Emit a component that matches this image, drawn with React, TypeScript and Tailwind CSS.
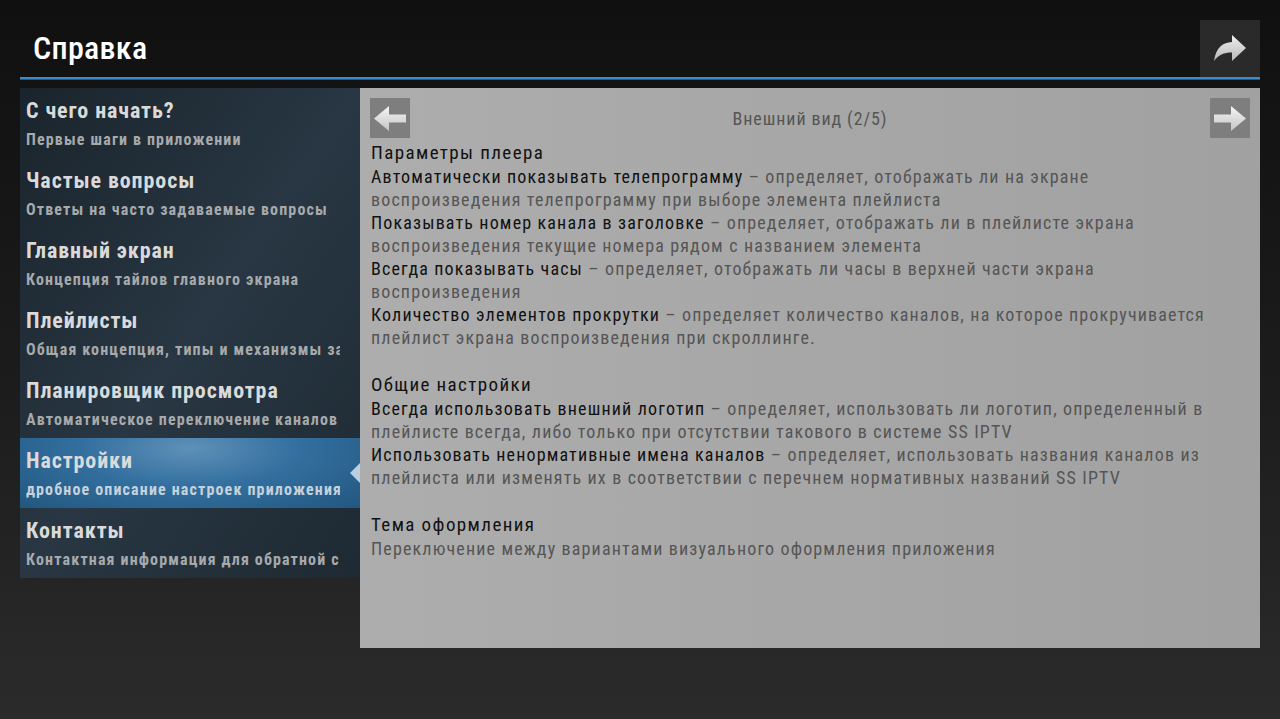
import React from 'react';

const font = { fontFamily: '"Roboto Condensed", "Liberation Sans Narrow", Roboto, sans-serif' };

const menu = [
  { title: 'С чего начать?', sub: 'Первые шаги в приложении' },
  { title: 'Частые вопросы', sub: 'Ответы на часто задаваемые вопросы' },
  { title: 'Главный экран', sub: 'Концепция тайлов главного экрана' },
  { title: 'Плейлисты', sub: 'Общая концепция, типы и механизмы загрузки' },
  { title: 'Планировщик просмотра', sub: 'Автоматическое переключение каналов' },
  { title: 'Настройки', sub: 'дробное описание настроек приложения', active: true },
  { title: 'Контакты', sub: 'Контактная информация для обратной связи' },
];

type Line = { strong?: string; text?: string };
type Section = { heading: string; lines: Line[] };

const sections: Section[] = [
  {
    heading: 'Параметры плеера',
    lines: [
      { strong: 'Автоматически показывать телепрограмму', text: ' – определяет, отображать ли на экране' },
      { text: 'воспроизведения телепрограмму при выборе элемента плейлиста' },
      { strong: 'Показывать номер канала в заголовке', text: ' – определяет, отображать ли в плейлисте экрана' },
      { text: 'воспроизведения текущие номера рядом с названием элемента' },
      { strong: 'Всегда показывать часы', text: ' – определяет, отображать ли часы в верхней части экрана' },
      { text: 'воспроизведения' },
      { strong: 'Количество элементов прокрутки', text: ' – определяет количество каналов, на которое прокручивается' },
      { text: 'плейлист экрана воспроизведения при скроллинге.' },
    ],
  },
  {
    heading: 'Общие настройки',
    lines: [
      { strong: 'Всегда использовать внешний логотип', text: ' – определяет, использовать ли логотип, определенный в' },
      { text: 'плейлисте всегда, либо только при отсутствии такового в системе SS IPTV' },
      { strong: 'Использовать ненормативные имена каналов', text: ' – определяет, использовать названия каналов из' },
      { text: 'плейлиста или изменять их в соответствии с перечнем нормативных названий SS IPTV' },
    ],
  },
  {
    heading: 'Тема оформления',
    lines: [{ text: 'Переключение между вариантами визуального оформления приложения' }],
  },
];

function BlockArrow({ dir }: { dir: 'left' | 'right' }) {
  const id = `ga-${dir}`;
  return (
    <svg width="32" height="25" viewBox="0 0 32 25" className={dir === 'left' ? '-scale-x-100' : ''}>
      <defs>
        <linearGradient id={id} x1="0" y1="0" x2="0" y2="1">
          <stop offset="0" stopColor="#f6f6f6" />
          <stop offset="1" stopColor="#c4c4c4" />
        </linearGradient>
      </defs>
      <path d="M0 8.5 H17 V0 L32 12.5 L17 25 V16.5 H0 Z" fill={`url(#${id})`} />
    </svg>
  );
}

function ShareArrow() {
  return (
    <svg width="34" height="28" viewBox="0 0 34 28">
      <defs>
        <linearGradient id="gs" x1="0" y1="0" x2="0" y2="1">
          <stop offset="0" stopColor="#f0f0f0" />
          <stop offset="1" stopColor="#b8b8b8" />
        </linearGradient>
      </defs>
      <path d="M33 13 L19 0 L19 7 C10 7.5 3 12 1 26 C5 20 11 17.5 19 17.5 L19 26 Z" fill="url(#gs)" />
    </svg>
  );
}

export default function App() {
  return (
    <div
      className="w-[1280px] h-[719px] overflow-hidden bg-gradient-to-b from-[#101010] via-[#1b1b1b] to-[#2b2b2b] flex flex-col px-5 pt-5"
      style={font}
    >
      <header className="flex items-stretch h-[57px]">
        <h1 className="flex-1 pl-[13px] pt-[6px] text-[32px] leading-[44px] font-medium tracking-[0.3px] text-white">
          Справка
        </h1>
        <button className="w-[60px] bg-[#2a2a2a] flex items-center justify-center">
          <ShareArrow />
        </button>
      </header>
      <div className="h-[3px] bg-[#3a8bcf] border-b border-[#245a88]" />

      <div className="flex mt-2">
        <nav className="w-[340px] h-[490px] bg-gradient-to-br from-[#1a242c] via-[#283743] to-[#1e2a33]">
          {menu.map((m) => (
            <div
              key={m.title}
              className={`relative h-[70px] pl-[6px] pt-[7px] overflow-hidden ${
                m.active
                  ? 'bg-[radial-gradient(ellipse_at_50%_15%,#5f91b8_0%,#336f9f_45%,#22577f_100%)]'
                  : ''
              }`}
            >
              <div className="text-[22px] leading-[31px] font-bold tracking-[0.9px] text-[#dadada] whitespace-nowrap">
                {m.title}
              </div>
              <div
                className={`text-[16px] leading-[27px] font-bold tracking-[1.15px] whitespace-nowrap overflow-hidden w-[314px] ${
                  m.active ? 'text-[#c4d2de]' : 'text-[#a7a9ab]'
                }`}
              >
                {m.sub}
              </div>
              {m.active && (
                <div className="absolute right-0 top-[25px] w-0 h-0 border-y-[10px] border-y-transparent border-r-[10px] border-r-[#b9d0e2]" />
              )}
            </div>
          ))}
        </nav>

        <main className="w-[900px] h-[560px] bg-gradient-to-r from-[#adadad] to-[#a1a1a1] px-[10px] pt-[10px]">
          <div className="flex items-center justify-between h-[40px]">
            <button className="w-10 h-10 bg-[#7e7e7e] flex items-center justify-center">
              <BlockArrow dir="left" />
            </button>
            <div className="text-[18px] tracking-[0.9px] text-[#555555] pt-px">Внешний вид (2/5)</div>
            <button className="w-10 h-10 bg-[#7e7e7e] flex items-center justify-center">
              <BlockArrow dir="right" />
            </button>
          </div>

          <div className="pl-px pt-[2px]">
            {sections.map((s, i) => (
              <section key={s.heading} className={i > 0 ? 'mt-[23px]' : ''}>
                <h2 className="text-[19px] leading-[25px] tracking-[1.4px] text-[#111111]">{s.heading}</h2>
                {s.lines.map((l, j) => (
                  <p key={j} className="text-[18px] leading-[23px] tracking-[1.15px] text-[#555555] whitespace-nowrap">
                    {l.strong && <span className="text-[#111111]">{l.strong}</span>}
                    {l.text}
                  </p>
                ))}
              </section>
            ))}
          </div>
        </main>
      </div>
    </div>
  );
}
